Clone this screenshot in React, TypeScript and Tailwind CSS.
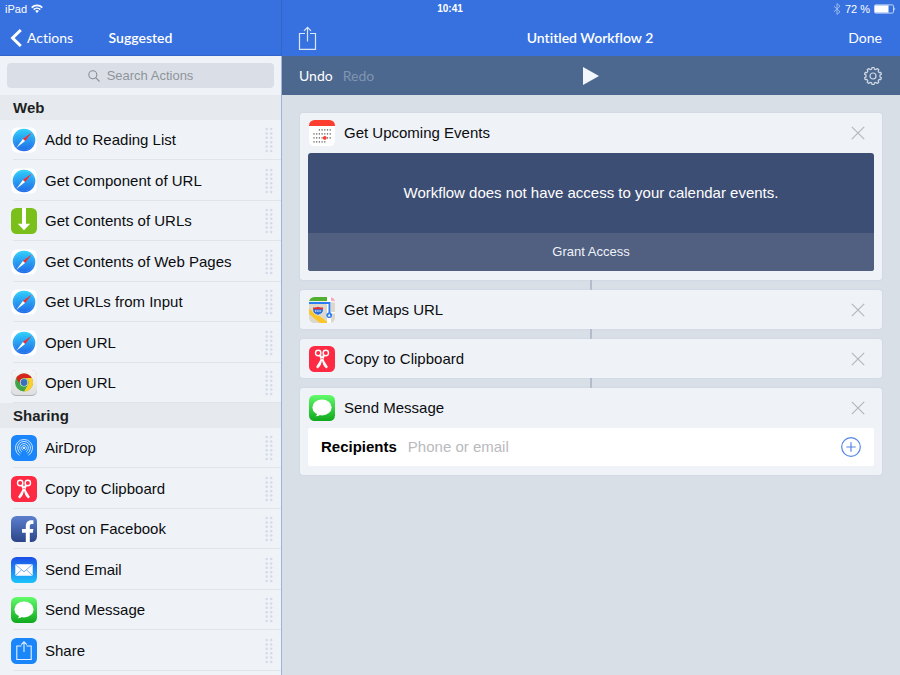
import React from "react";

const sans = "font-['Helvetica_Neue','Liberation_Sans',Arial,sans-serif]";
const rounded = "font-['Avenir_Next',Lato,sans-serif] [font-variant-ligatures:none]";

function Tile({ children }: { children: React.ReactNode }) {
  return (
    <svg viewBox="0 0 26 26" className="size-[26px] shrink-0" aria-hidden="true">
      {children}
    </svg>
  );
}

function SafariIcon() {
  return (
    <Tile>
      <defs>
        <linearGradient id="safari" x1="0" y1="0" x2="0" y2="1">
          <stop offset="0" stopColor="#2fd0fb" />
          <stop offset="1" stopColor="#2068e8" />
        </linearGradient>
      </defs>
      <rect x="0.5" y="0.5" width="25" height="25" rx="5.5" fill="#fff" />
      <circle cx="13" cy="13" r="11.3" fill="url(#safari)" />
      <circle cx="13" cy="13" r="9.9" fill="none" stroke="#8fd6fb" strokeOpacity="0.7" strokeWidth="0.8" strokeDasharray="0.4 0.9" />
      <path d="M20.8 5.4 14.1 14.1 11.9 11.9Z" fill="#fb2a2b" />
      <path d="M5.4 20.8 14.1 14.1 11.9 11.9Z" fill="#fff" />
    </Tile>
  );
}

function DownloadIcon() {
  return (
    <Tile>
      <rect width="26" height="26" rx="5.5" fill="#7bc01a" />
      <path d="M11 0h4v15.8h4.2L13 22.2 6.8 15.8H11Z" fill="#fff" />
    </Tile>
  );
}

function ChromeIcon() {
  return (
    <Tile>
      <defs>
        <linearGradient id="chrome-tile" x1="0" y1="0" x2="0" y2="1">
          <stop offset="0" stopColor="#f6f6f6" />
          <stop offset="1" stopColor="#dededf" />
        </linearGradient>
      </defs>
      <rect width="26" height="26" rx="5.5" fill="#aeb1b5" />
      <rect width="26" height="25" rx="5.5" fill="url(#chrome-tile)" />
      <circle cx="13" cy="12.5" r="9" fill="#3fa648" />
      <path d="M5.2 8A9 9 0 0 1 20.8 8H13a4.5 4.5 0 0 0-3.9 6.7Z" fill="#d8261f" />
      <path d="M20.8 8A9 9 0 0 1 13 21.5l3.9-6.8A4.5 4.5 0 0 0 13 8Z" fill="#fbcf2d" />
      <circle cx="13" cy="12.5" r="4.1" fill="#e6eadf" />
      <circle cx="13" cy="12.5" r="3.4" fill="#3a70b9" />
    </Tile>
  );
}

function AirDropIcon() {
  return (
    <Tile>
      <rect width="26" height="26" rx="5.5" fill="#1a86f9" />
      <g fill="none" stroke="#d9ecff" strokeWidth="0.9" strokeLinecap="round">
        <path d="M8.2 20.2A8.6 8.6 0 1 1 17.8 20.2" />
        <path d="M9.2 18.2A6.5 6.5 0 1 1 16.8 18.2" />
        <path d="M10.4 16.5A4.4 4.4 0 1 1 15.6 16.5" />
        <path d="M11.7 15A2.4 2.4 0 1 1 14.3 15" />
      </g>
      <circle cx="13" cy="13" r="1.1" fill="#fff" />
    </Tile>
  );
}

function ScissorsIcon() {
  return (
    <Tile>
      <rect width="26" height="26" rx="5.5" fill="#fe2a44" />
      <g fill="none" stroke="#fff" strokeWidth="1.4">
        <circle cx="9.2" cy="7" r="2.7" />
        <circle cx="16.8" cy="7" r="2.7" />
      </g>
      <path d="M10 9.6 12 8.8 15 14.4 18.9 21 17.3 22.4C15.2 21 13.6 18.600 12.700 15.800Z" fill="#fff" />
      <path d="M16 9.6 14 8.8 11 14.4 7.100 21 8.700 22.400C10.800 21 12.400 18.600 13.300 15.800Z" fill="#fff" />
      <path d="M13 14.800 15 22h-4Z" fill="#fe2a44" />
      <circle cx="13" cy="12.6" r="0.7" fill="#fe2a44" />
    </Tile>
  );
}

function FacebookIcon() {
  return (
    <Tile>
      <defs>
        <linearGradient id="facebook" x1="0" y1="0" x2="0" y2="1">
          <stop offset="0" stopColor="#5c7fce" />
          <stop offset="1" stopColor="#2b4688" />
        </linearGradient>
      </defs>
      <rect width="26" height="26" rx="5.5" fill="url(#facebook)" />
      <path d="M14.8 26V16.8H11V13h3.8v-2.6C14.8 6.400 16.800 4.200 20.400 4.200H22.400V8H20.600C19.200 8 18.800 8.800 18.800 10.200V13h3.600l-.6 3.800h-3V26Z" fill="#fff" />
    </Tile>
  );
}

function MailIcon() {
  return (
    <Tile>
      <defs>
        <linearGradient id="mail" x1="0" y1="0" x2="0" y2="1">
          <stop offset="0" stopColor="#1c4de8" />
          <stop offset="1" stopColor="#1dc4fb" />
        </linearGradient>
      </defs>
      <rect width="26" height="26" rx="5.5" fill="url(#mail)" />
      <rect x="4.300" y="7.200" width="17.400" height="11.600" rx="1.200" fill="#fff" />
      <path d="M4.600 7.600 13 14.800l8.400-7.200M4.600 18.400l6-5.600M21.400 18.400l-6-5.600" fill="none" stroke="#5d9df2" strokeWidth="0.8" />
    </Tile>
  );
}

function MessageIcon() {
  return (
    <Tile>
      <defs>
        <linearGradient id="message" x1="0" y1="0" x2="0" y2="1">
          <stop offset="0" stopColor="#62fb6c" />
          <stop offset="1" stopColor="#10a81c" />
        </linearGradient>
      </defs>
      <rect width="26" height="26" rx="5.5" fill="url(#message)" />
      <ellipse cx="13" cy="12.400" rx="9.600" ry="8" fill="#fff" />
      <path d="M8 17.500C8.300 19.500 7.600 20.600 6.600 21.200 9 21.200 10.800 20.400 11.800 19.200Z" fill="#fff" />
    </Tile>
  );
}

function ShareTileIcon() {
  return (
    <Tile>
      <rect width="26" height="26" rx="5.5" fill="#1a86f9" />
      <path d="M10.500 8H5.800V21.500H20.200V8H15.500M13 14V3.800M10.200 6.600 13 3.800l2.800 2.800" fill="none" stroke="#e6f2ff" strokeWidth="1.100" />
    </Tile>
  );
}

function CalendarIcon() {
  const dots: React.ReactNode[] = [];
  for (let row = 0; row < 4; row++) {
    for (let col = 0; col < 7; col++) {
      if ((row === 0 && col < 2) || (row === 3 && col > 4)) continue;
      dots.push(<rect key={`${row}-${col}`} x={4.4 + col * 2.7} y={9.3 + row * 4} width="1.2" height="1.2" fill="#4a4a4c" />);
    }
  }
  return (
    <Tile>
      <rect width="26" height="26" rx="5.5" fill="#fff" />
      <path d="M0 6V5.500A5.500 5.500 0 0 1 5.500 0h15A5.500 5.500 0 0 1 26 5.500V6Z" fill="#fc3d30" />
      {dots}
      <circle cx="15.800" cy="17.900" r="1.900" fill="#fc3d30" />
    </Tile>
  );
}

function MapsIcon() {
  return (
    <Tile>
      <defs>
        <clipPath id="maps-tile">
          <rect width="26" height="26" rx="5.5" />
        </clipPath>
      </defs>
      <g clipPath="url(#maps-tile)">
        <rect width="26" height="26" fill="#ddd8c9" />
        <path d="M0 0h18v4.200H0Z" fill="#52b02e" />
        <path d="M22 0h4v4.500l-4-1Z" fill="#f6a9bd" />
        <path d="M18 0h4v26h-4Z" fill="#fff" />
        <path d="M0 4.200h26v1H0ZM22 15h4v1.500h-4Z" fill="#fff" />
        <path d="M0 11.500 18 24.500V26H11L0 17Z" fill="#fcc52c" />
        <path d="M0 6h20.500v11" fill="none" stroke="#2a7df5" strokeWidth="2" />
        <circle cx="20.200" cy="18.200" r="2.800" fill="#2a7df5" />
        <path d="m20.200 16.600 1.400 2.800h-2.800Z" fill="#fff" />
        <path d="M4.500 10.300Q6.500 11 9 9.800 11.500 11 13.600 10.300 16.600 16 9 18.300 1.600 16 4.500 10.300Z" fill="#2f6fd8" stroke="#fff" strokeWidth="0.600" />
        <path d="M4.300 10.300Q6.500 11 9 9.800 11.500 11 13.800 10.300L14.300 12.300H3.800Z" fill="#e5332f" />
        <path d="M6 14h6" stroke="#cfe0ff" strokeWidth="1.600" strokeDasharray="1.400 0.800" />
      </g>
    </Tile>
  );
}

function Grip() {
  const rows = [0, 1, 2, 3, 4, 5];
  return (
    <svg viewBox="0 0 8 26" className="h-[26px] w-2 shrink-0" fill="#d4dae6" aria-hidden="true">
      {rows.map((r) => (
        <g key={r}>
          <circle cx="1.700" cy={2 + r * 4.400} r="1.250" />
          <circle cx="6.200" cy={2 + r * 4.400} r="1.250" />
        </g>
      ))}
    </svg>
  );
}

type Action = { name: string; Icon: () => React.ReactElement };

const sections: { title: string; actions: Action[] }[] = [
  {
    title: "Web",
    actions: [
      { name: "Add to Reading List", Icon: SafariIcon },
      { name: "Get Component of URL", Icon: SafariIcon },
      { name: "Get Contents of URLs", Icon: DownloadIcon },
      { name: "Get Contents of Web Pages", Icon: SafariIcon },
      { name: "Get URLs from Input", Icon: SafariIcon },
      { name: "Open URL", Icon: SafariIcon },
      { name: "Open URL", Icon: ChromeIcon },
    ],
  },
  {
    title: "Sharing",
    actions: [
      { name: "AirDrop", Icon: AirDropIcon },
      { name: "Copy to Clipboard", Icon: ScissorsIcon },
      { name: "Post on Facebook", Icon: FacebookIcon },
      { name: "Send Email", Icon: MailIcon },
      { name: "Send Message", Icon: MessageIcon },
      { name: "Share", Icon: ShareTileIcon },
    ],
  },
];

function StatusBar() {
  return (
    <div className="flex h-5 bg-[#3771df] text-[11px] leading-[18px] text-white">
      <div className="flex w-[282px] items-start gap-1 border-r border-[#3264c9] pl-[5px]">
        <span>iPad</span>
        <svg viewBox="0 0 12 9" className="mt-1 h-[9px] w-3" fill="none" stroke="#fff" strokeWidth="1.700" aria-label="Wi-Fi">
          <path d="M0.700 3.600A7.500 7.500 0 0 1 11.300 3.600M2.700 5.600A4.700 4.700 0 0 1 9.300 5.600" />
          <path d="M4.200 7 6 9 7.800 7A2.500 2.500 0 0 0 4.200 7Z" fill="#fff" stroke="none" />
        </svg>
      </div>
      <div className="flex-1 text-center text-[10px] font-bold">10:41</div>
      <div className="flex w-[282px] items-start justify-end gap-1 pr-1">
        <svg viewBox="0 0 8 12" className="mt-[3px] h-3 w-2" fill="none" stroke="#9dbaf1" strokeWidth="1" aria-label="Bluetooth">
          <path d="M1 3.200 7 8.800 4 11.400V0.600L7 3.200 1 8.800" />
        </svg>
        <span>72 %</span>
        <svg viewBox="0 0 22 10" className="mt-1 h-2.5 w-[22px]" aria-label="Battery">
          <rect x="0.500" y="0.900" width="19" height="8.200" rx="1.200" fill="none" stroke="#c3d4f6" />
          <rect x="1" y="1.400" width="13.500" height="7.200" fill="#fff" />
          <path d="M20.500 3.300Q22 5 20.500 6.700Z" fill="#fff" />
        </svg>
      </div>
    </div>
  );
}

function Sidebar() {
  return (
    <aside className="w-[282px] shrink-0 border-r border-[#9db3dc] bg-[#eff3f8]">
      <header className={`${rounded} -mr-px grid h-9 grid-cols-[1fr_auto_1fr] items-center border-r border-b border-[#3264c9] bg-[#3771df] text-sm text-white`}>
        <button type="button" className="flex items-center gap-[5px] pl-[10px]">
          <svg viewBox="0 0 12 18" className="h-[18px] w-3" fill="none" stroke="#fff" strokeWidth="3" aria-hidden="true">
            <path d="M10.800 1 2.600 9l8.200 8" />
          </svg>
          Actions
        </button>
        <h1 className="font-semibold">Suggested</h1>
      </header>
      <div className="px-[7px] pt-[7px] pb-[7px]">
        <label className="flex h-[25px] items-center justify-center gap-[7px] rounded-[4px] bg-[#dadfe7]">
          <svg viewBox="0 0 12 12" className="size-3" fill="none" stroke="#8b8f96" strokeWidth="1.100" aria-hidden="true">
            <circle cx="4.800" cy="4.800" r="4" />
            <path d="m7.700 7.700 3.800 3.800" />
          </svg>
          <input
            type="search"
            aria-label="Search Actions"
            placeholder="Search Actions"
            className="field-sizing-content bg-transparent text-[13px] leading-5 outline-none placeholder:text-[#8f939a] placeholder:opacity-100"
          />
        </label>
      </div>
      {sections.map((section) => (
        <section key={section.title}>
          <h2 className="h-[25px] bg-[#e6eaef] pl-[13px] text-[15px] leading-[25px] font-bold text-[#1d1f22]">{section.title}</h2>
          <ul className="bg-[#eff3f8]">
            {section.actions.map(({ name, Icon }, i) => (
              <li
                key={i}
                className="flex items-center bg-linear-to-r from-transparent from-[13px] to-[#e0e5eb] to-[13px] bg-size-[100%_1px] bg-bottom bg-no-repeat odd:h-10 even:h-[41px]"
              >
                <div className="pl-[11px]">
                  <Icon />
                </div>
                <div className="ml-2 flex-1 text-[15px] leading-5 text-[#0b0c0e]">{name}</div>
                <div className="pr-2">
                  <Grip />
                </div>
              </li>
            ))}
          </ul>
        </section>
      ))}
    </aside>
  );
}

function Card({ title, Icon, children }: { title: string; Icon: () => React.ReactElement; children?: React.ReactNode }) {
  return (
    <article className="rounded-[3px] bg-[#eff3f8] shadow-[0_0_2px_#c6cedc]">
      <header className="flex h-[39px] items-center pr-[17px] pl-[9px]">
        <Icon />
        <h3 className="ml-[9px] flex-1 text-[15px] leading-5 text-[#0b0c0e]">{title}</h3>
        <button type="button" aria-label={`Remove ${title}`}>
          <svg viewBox="0 0 14 14" className="size-3.5" stroke="#b3b7be" strokeWidth="1.200" aria-hidden="true">
            <path d="m0.800 0.800 12.400 12.400M13.200 0.800 0.800 13.200" />
          </svg>
        </button>
      </header>
      {children && <div className="px-2 pt-px pb-[9px]">{children}</div>}
    </article>
  );
}

function Connector() {
  return <div className="mx-auto h-2.5 w-0.5 bg-[#b4bccb]" />;
}

function Workflow() {
  return (
    <main className="flex min-w-0 flex-1 flex-col bg-[#d8dfe7]">
      <header className={`${rounded} grid h-9 grid-cols-[1fr_auto_1fr] items-center bg-[#3771df] pr-[18px] pl-4 text-sm text-white`}>
        <button type="button" aria-label="Share workflow" className="justify-self-start">
          <svg viewBox="0 0 19 24" className="h-6 w-[19px]" fill="none" stroke="#dbe6fb" strokeWidth="1.200" aria-hidden="true">
            <path d="M7 7.500H1.500V23.300H17.500V7.500H12M9.500 15.500V1.300M6 4.800 9.500 1.300 13 4.800" />
          </svg>
        </button>
        <h1 className="font-semibold">Untitled Workflow 2</h1>
        <button type="button" className="justify-self-end">Done</button>
      </header>
      <div className={`${rounded} grid h-[39px] grid-cols-[1fr_auto_1fr] items-center bg-[#4c688f] pr-[18px] pl-[17px] text-sm text-white`}>
        <div className="flex gap-2.5">
          <button type="button">Undo</button>
          <button type="button" disabled className="text-[#8195b1]">Redo</button>
        </div>
        <button type="button" aria-label="Run workflow">
          <svg viewBox="0 0 16 18" className="h-[18px] w-4" fill="#f3f6fa" aria-hidden="true">
            <path d="M0 0 16 9 0 18Z" />
          </svg>
        </button>
        <button type="button" aria-label="Settings" className="justify-self-end">
          <svg viewBox="0 0 18 18" className="size-[18px]" fill="none" stroke="#d0d9e5" strokeWidth="1.200" strokeLinejoin="round" aria-hidden="true">
            <path d={gearPath} />
            <circle cx="9" cy="9" r="3" />
          </svg>
        </button>
      </div>
      <div className="px-[18px] pt-[18px] pb-[18px]">
        <Card title="Get Upcoming Events" Icon={CalendarIcon}>
          <div className="overflow-hidden rounded-[3px] bg-[#3d4e74] text-center text-white">
            <p className="px-4 py-[30px] text-[15px] leading-5">Workflow does not have access to your calendar events.</p>
            <button type="button" className="block h-[38px] w-full bg-[#515f81] text-[13px] text-[#f0f3f8]">Grant Access</button>
          </div>
        </Card>
        <Connector />
        <Card title="Get Maps URL" Icon={MapsIcon} />
        <Connector />
        <Card title="Copy to Clipboard" Icon={ScissorsIcon} />
        <Connector />
        <Card title="Send Message" Icon={MessageIcon}>
          <div className="flex h-[38px] items-center rounded-[2px] bg-white pr-[13px] pl-[13px] text-[15px] leading-5">
            <label htmlFor="recipients" className="font-bold text-black">Recipients</label>
            <input
              id="recipients"
              type="text"
              placeholder="Phone or email"
              className="ml-[11px] min-w-0 flex-1 bg-transparent outline-none placeholder:text-[#b9babd] placeholder:opacity-100"
            />
            <button type="button" aria-label="Add recipient">
              <svg viewBox="0 0 20 20" className="size-5" fill="none" stroke="#5585e3" strokeWidth="1.200" aria-hidden="true">
                <circle cx="10" cy="10" r="9.300" />
                <path d="M10 5.300v9.400M5.300 10h9.400" />
              </svg>
            </button>
          </div>
        </Card>
      </div>
    </main>
  );
}

/* Outline of a ten-toothed gear centred on 9,9. */
const gearPath = (() => {
  const points: string[] = [];
  const teeth = 10;
  const profile: [number, number][] = [
    [-0.3, 7],
    [-0.18, 8.6],
    [0.18, 8.6],
    [0.3, 7],
  ];
  for (let i = 0; i < teeth; i++) {
    for (const [offset, radius] of profile) {
      const angle = ((i + offset) * 2 * Math.PI) / teeth;
      points.push(`${(9 + radius * Math.sin(angle)).toFixed(2)} ${(9 - radius * Math.cos(angle)).toFixed(2)}`);
    }
  }
  return `M${points.join("L")}Z`;
})();

export default function App() {
  return (
    <div className={`${sans} flex min-h-screen flex-col`}>
      <StatusBar />
      <div className="flex flex-1">
        <Sidebar />
        <Workflow />
      </div>
    </div>
  );
}
